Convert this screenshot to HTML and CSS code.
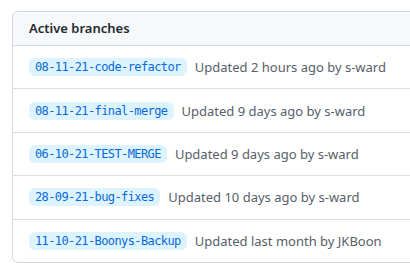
FILE: index.html
```html
<!DOCTYPE html>
<html lang="en">
<head>
    <meta charset="UTF-8">
    <title>Branches</title>
    <link rel="stylesheet" href="styles.css">
</head>
<body>
    <div class="box">
        <div class="box-header">Active branches</div>
        <div class="branch-row">
            <span class="branch-name">08-11-21-code-refactor</span>
            <span class="branch-meta">Updated 2 hours ago by s-ward</span>
        </div>
        <div class="branch-row">
            <span class="branch-name">08-11-21-final-merge</span>
            <span class="branch-meta">Updated 9 days ago by s-ward</span>
        </div>
        <div class="branch-row">
            <span class="branch-name">06-10-21-TEST-MERGE</span>
            <span class="branch-meta">Updated 9 days ago by s-ward</span>
        </div>
        <div class="branch-row">
            <span class="branch-name">28-09-21-bug-fixes</span>
            <span class="branch-meta">Updated 10 days ago by s-ward</span>
        </div>
        <div class="branch-row">
            <span class="branch-name">11-10-21-Boonys-Backup</span>
            <span class="branch-meta">Updated last month by JKBoon</span>
        </div>
    </div>
</body>
</html>
```

FILE: styles.css
```css
body {
    margin: 0;
    padding: 11px 0 0 12px;
    overflow: hidden;
    background: #fff;
    font-family: "Noto Sans", "Open Sans", sans-serif;
}

.box {
    width: 420px;
    border: 1px solid #d0d7de;
    border-radius: 6px;
}

.box-header {
    height: 33px;
    line-height: 33px;
    padding-left: 16px;
    background-color: #f6f8fa;
    border-bottom: 1px solid #d0d7de;
    border-radius: 6px 6px 0 0;
    font-size: 13px;
    font-weight: 600;
    color: #24292f;
}

.branch-row {
    display: flex;
    align-items: center;
    gap: 8px;
    height: 42.4px;
    padding-left: 16px;
    border-bottom: 1px solid #d8dee4;
}

.branch-row:last-child {
    border-bottom: none;
}

.branch-name {
    padding: 0 6px;
    height: 18px;
    line-height: 18px;
    font-family: "DejaVu Sans Mono", monospace;
    font-size: 12px;
    letter-spacing: -0.6px;
    color: #0969da;
    background-color: #ddf4ff;
    border-radius: 6px;
}

.branch-meta {
    font-size: 13px;
    color: #57606a;
}
```
